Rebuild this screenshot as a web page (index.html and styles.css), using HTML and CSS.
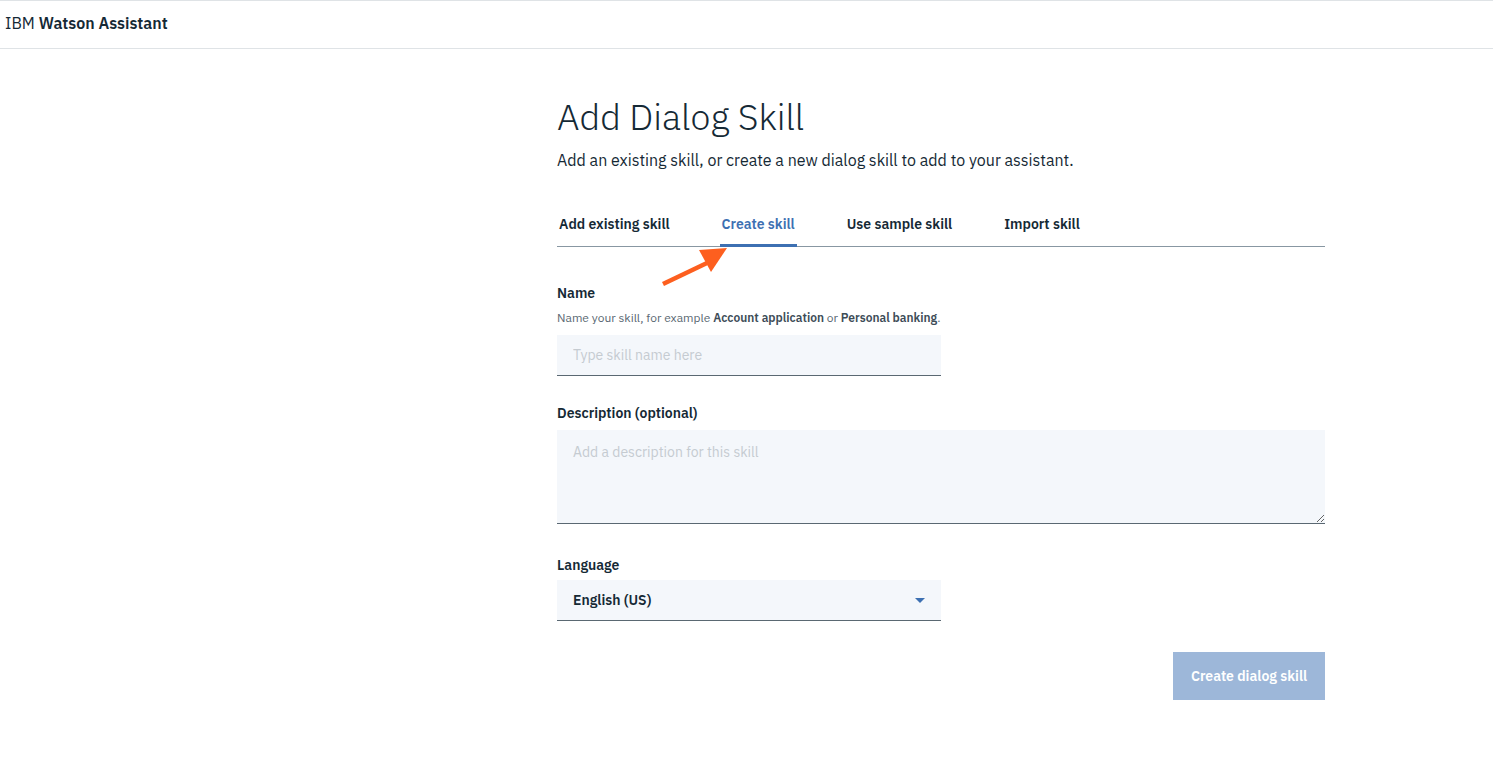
FILE: index.html
```html
<!DOCTYPE html>
<html lang="en">
<head>
<meta charset="utf-8">
<title>Add Dialog Skill</title>
<link rel="stylesheet" href="styles.css">
</head>
<body>
<header class="topbar">
  <span class="brand">IBM <strong>Watson Assistant</strong></span>
</header>
<main class="page">
  <section class="panel">
    <h1 class="title">Add Dialog Skill</h1>
    <p class="subtitle">Add an existing skill, or create a new dialog skill to add to your assistant.</p>
    <nav class="tabs">
      <a class="tab">Add existing skill</a>
      <a class="tab active">Create skill</a>
      <a class="tab">Use sample skill</a>
      <a class="tab">Import skill</a>
      <svg class="arrow" width="80" height="44" viewBox="0 0 80 44">
        <line x1="6" y1="38" x2="50" y2="17" stroke="#fd5f1f" stroke-width="4.5" stroke-linecap="butt"/>
        <polygon points="70,2 42,4 54,26" fill="#fd5f1f"/>
      </svg>
    </nav>
    <form class="form">
      <div class="field">
        <label class="label">Name</label>
        <p class="helper">Name your skill, for example <b>Account application</b> or <b>Personal banking</b>.</p>
        <input class="input short" type="text" placeholder="Type skill name here">
      </div>
      <div class="field field-desc">
        <label class="label">Description (optional)</label>
        <textarea class="textarea" placeholder="Add a description for this skill"></textarea>
      </div>
      <div class="field">
        <label class="label label-lang">Language</label>
        <div class="select short">
          <span>English (US)</span>
          <svg class="caret" width="10" height="5" viewBox="0 0 10 5"><polygon points="0,0 10,0 5,5" fill="#3d70b2"/></svg>
        </div>
      </div>
      <div class="actions">
        <button class="btn" type="button">Create dialog skill</button>
      </div>
    </form>
  </section>
</main>
</body>
</html>
```
FILE: styles.css
```css
* { box-sizing: border-box; }
body {
  margin: 0;
  background: #fff;
  color: #152935;
  font-family: "IBM Plex Sans", Roboto, "Liberation Sans", sans-serif;
}
.topbar {
  height: 49px;
  border-top: 1px solid #dfe3e6;
  border-bottom: 1px solid #dfe3e6;
  display: flex;
  align-items: center;
  padding-left: 5px;
  padding-bottom: 4px;
}
.brand {
  font-size: 16px;
  color: #152935;
}
.brand strong { font-weight: 600; }
.page {
  padding-left: 557px;
  padding-top: 46px;
}
.panel { width: 768px; }
.title {
  margin: 0;
  font-size: 36px;
  line-height: 44px;
  font-weight: 300;
}
.subtitle {
  margin: 9px 0 0;
  font-size: 16px;
  line-height: 24px;
}
.tabs {
  position: relative;
  display: flex;
  gap: 48px;
  margin-top: 30px;
  border-bottom: 1px solid #8897a2;
}
.tab {
  padding: 12px 2px 10px;
  font-size: 14px;
  line-height: 20px;
  font-weight: 600;
  color: #152935;
  border-bottom: 3px solid transparent;
  margin-bottom: -1px;
}
.tab.active {
  color: #3d70b2;
  border-bottom-color: #3d70b2;
}
.arrow {
  position: absolute;
  left: 100px;
  top: 44px;
}
.form { margin-top: 37px; }
.field { margin-bottom: 28px; }
.field-desc { margin-bottom: 32px; }
.label {
  display: block;
  font-size: 14px;
  line-height: 18px;
  font-weight: 600;
  margin-bottom: 8px;
}
.label-lang { margin-bottom: 6px; }
.helper {
  margin: 0 0 9px;
  font-size: 12px;
  line-height: 16px;
  color: #5a6872;
}
.helper b { font-weight: 600; color: #3d4c57; }
.input, .textarea, .select {
  display: block;
  background: #f4f7fb;
  border: none;
  border-bottom: 1px solid #5a6872;
  font-family: inherit;
  font-size: 14px;
  color: #152935;
  outline: none;
}
.input {
  height: 41px;
  padding: 0 16px;
}
.short { width: 384px; }
.textarea {
  width: 768px;
  height: 94px;
  padding: 13px 16px;
  resize: vertical;
}
.input::placeholder, .textarea::placeholder { color: #c5cbd1; }
.select {
  height: 41px;
  padding: 0 16px;
  display: flex;
  align-items: center;
  justify-content: space-between;
  font-weight: 600;
}
.actions {
  display: flex;
  justify-content: flex-end;
  margin-top: 31px;
}
.btn {
  width: 152px;
  height: 48px;
  border: none;
  background: #9db7d9;
  color: #fff;
  font-family: inherit;
  font-size: 14px;
  font-weight: 600;
}
```
